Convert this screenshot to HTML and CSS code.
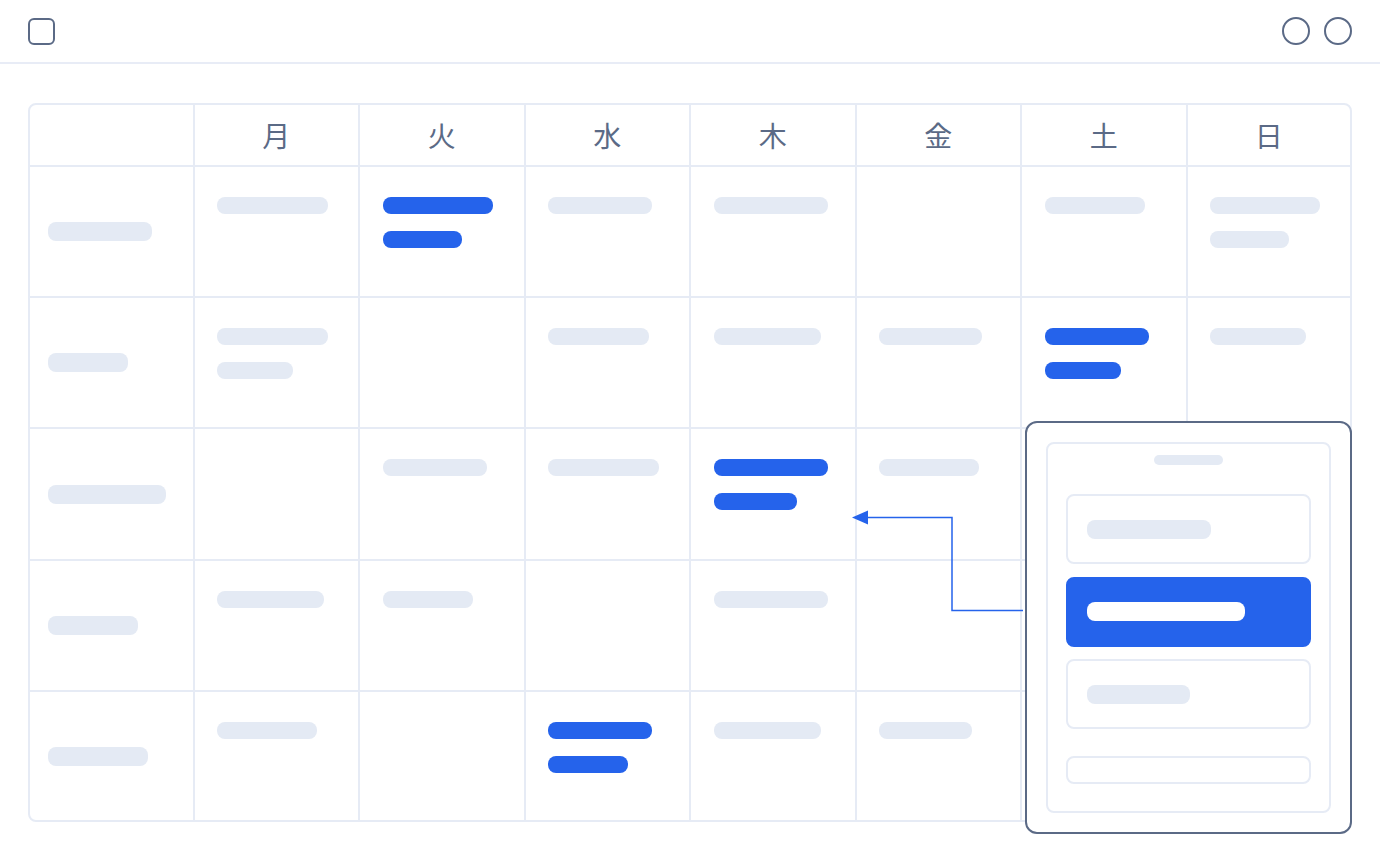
FILE: index.html
```html
<!DOCTYPE html>
<html lang="ja">
<head>
    <meta charset="UTF-8">
    <meta name="viewport" content="width=device-width, initial-scale=1.0">
    <title>週間スケジュール</title>
    <link rel="stylesheet" href="styles.css">
</head>
<body>
    <div class="topbar">
        <span class="icon-square"></span>
        <div class="topbar-actions">
            <span class="icon-circle"></span>
            <span class="icon-circle"></span>
        </div>
    </div>

    <div class="board">
        <div class="week">
            <div class="cell head"></div>
            <div class="cell head">月</div>
            <div class="cell head">火</div>
            <div class="cell head">水</div>
            <div class="cell head">木</div>
            <div class="cell head">金</div>
            <div class="cell head">土</div>
            <div class="cell head last-col">日</div>

            <!-- row 1 -->
            <div class="cell label"><span class="bar label-bar" style="width:104px"></span></div>
            <div class="cell"><span class="bar" style="width:111px"></span></div>
            <div class="cell"><span class="bar blue" style="width:110px"></span><span class="bar blue" style="width:79px"></span></div>
            <div class="cell"><span class="bar" style="width:104px"></span></div>
            <div class="cell"><span class="bar" style="width:114px"></span></div>
            <div class="cell"></div>
            <div class="cell"><span class="bar" style="width:100px"></span></div>
            <div class="cell last-col"><span class="bar" style="width:110px"></span><span class="bar" style="width:79px"></span></div>

            <!-- row 2 -->
            <div class="cell label"><span class="bar label-bar" style="width:80px"></span></div>
            <div class="cell"><span class="bar" style="width:111px"></span><span class="bar" style="width:76px"></span></div>
            <div class="cell"></div>
            <div class="cell"><span class="bar" style="width:101px"></span></div>
            <div class="cell"><span class="bar" style="width:107px"></span></div>
            <div class="cell"><span class="bar" style="width:103px"></span></div>
            <div class="cell"><span class="bar blue" style="width:104px"></span><span class="bar blue" style="width:76px"></span></div>
            <div class="cell last-col"><span class="bar" style="width:96px"></span></div>

            <!-- row 3 -->
            <div class="cell label"><span class="bar label-bar" style="width:118px"></span></div>
            <div class="cell"></div>
            <div class="cell"><span class="bar" style="width:104px"></span></div>
            <div class="cell"><span class="bar" style="width:111px"></span></div>
            <div class="cell"><span class="bar blue" style="width:114px"></span><span class="bar blue" style="width:83px"></span></div>
            <div class="cell"><span class="bar" style="width:100px"></span></div>
            <div class="cell"></div>
            <div class="cell last-col"></div>

            <!-- row 4 -->
            <div class="cell label"><span class="bar label-bar" style="width:90px"></span></div>
            <div class="cell"><span class="bar" style="width:107px"></span></div>
            <div class="cell"><span class="bar" style="width:90px"></span></div>
            <div class="cell"></div>
            <div class="cell"><span class="bar" style="width:114px"></span></div>
            <div class="cell"></div>
            <div class="cell"></div>
            <div class="cell last-col"></div>

            <!-- row 5 -->
            <div class="cell label last-row"><span class="bar label-bar" style="width:100px"></span></div>
            <div class="cell last-row"><span class="bar" style="width:100px"></span></div>
            <div class="cell last-row"></div>
            <div class="cell last-row"><span class="bar blue" style="width:104px"></span><span class="bar blue" style="width:80px"></span></div>
            <div class="cell last-row"><span class="bar" style="width:107px"></span></div>
            <div class="cell last-row"><span class="bar" style="width:93px"></span></div>
            <div class="cell last-row"></div>
            <div class="cell last-row last-col"></div>
        </div>

        <!-- connector from the picker to the selected slot -->
        <svg class="connector" viewBox="28 103 1324 731" width="1324" height="731">
            <path d="M866 517.5 H952 V610.5 H1023" fill="none" stroke="#2563eb" stroke-width="1.5"/>
            <path d="M852 517.5 L868 510.5 L868 524.5 Z" fill="#2563eb"/>
        </svg>

        <div class="picker">
            <div class="picker-inner">
                <span class="handle"></span>
                <div class="option"><span class="bar label-bar" style="width:124px"></span></div>
                <div class="option selected"><span class="bar label-bar white" style="width:158px"></span></div>
                <div class="option"><span class="bar label-bar" style="width:103px"></span></div>
                <div class="picker-footer"></div>
            </div>
        </div>
    </div>
</body>
</html>
```

FILE: styles.css
```css
body {
    margin: 0;
    padding: 0 0 40px;
    background: #fff;
    font-family: "Noto Sans CJK JP", "Noto Sans", sans-serif;
}
.topbar {
    height: 62px;
    padding: 0 28px;
    display: flex;
    align-items: center;
    justify-content: space-between;
    border-bottom: 2px solid #e8ecf6;
}
.icon-square {
    width: 27px;
    height: 27px;
    box-sizing: border-box;
    border: 2px solid #5b6a86;
    border-radius: 6px;
}
.topbar-actions {
    display: flex;
    gap: 14px;
}
.icon-circle {
    width: 28px;
    height: 28px;
    box-sizing: border-box;
    border: 2px solid #5b6a86;
    border-radius: 50%;
}
.board {
    position: relative;
    width: 1324px;
    height: 731px;
    margin: 39px 28px 0;
}
.week {
    display: grid;
    grid-template-columns: 164.5px repeat(6, 165.5px) 162.5px;
    grid-template-rows: 62px 131px 131px 132px 131px 128px;
    border: 2px solid #e6ebf5;
    border-radius: 8px;
}
.cell {
    box-sizing: border-box;
    border-right: 2px solid #e6ebf5;
    border-bottom: 2px solid #e6ebf5;
    padding: 30px 0 0 22.5px;
    display: flex;
    flex-direction: column;
    align-items: flex-start;
    gap: 17px;
}
.cell.last-col {
    border-right: none;
}
.cell.last-row {
    border-bottom: none;
}
.cell.head {
    padding: 0;
    align-items: center;
    justify-content: center;
    font-size: 28px;
    color: #5b6a86;
}
.cell.label {
    padding: 0 0 0 18px;
    justify-content: center;
}
.bar {
    display: block;
    height: 17px;
    border-radius: 8px;
    background: #e4eaf4;
}
.bar.blue {
    background: #2563eb;
}
.label-bar {
    height: 19px;
}
.bar.white {
    background: #fff;
}
.connector {
    position: absolute;
    left: 0;
    top: 0;
    pointer-events: none;
}
.picker {
    position: absolute;
    left: 997px;
    top: 318px;
    width: 327px;
    box-sizing: border-box;
    padding: 19px;
    background: #fff;
    border: 2px solid #5b6a86;
    border-radius: 12px;
}
.picker-inner {
    border: 2px solid #e6ebf5;
    border-radius: 8px;
    padding: 11px 18px 27px;
    display: flex;
    flex-direction: column;
    gap: 12.5px;
}
.handle {
    align-self: center;
    width: 69px;
    height: 10px;
    border-radius: 5px;
    background: #e4eaf4;
    margin-bottom: 16.5px;
}
.option {
    height: 70px;
    box-sizing: border-box;
    border: 2px solid #e6ebf5;
    border-radius: 8px;
    padding-left: 19px;
    display: flex;
    align-items: center;
}
.option.selected {
    background: #2563eb;
    border-color: #2563eb;
}
.picker-footer {
    height: 28px;
    box-sizing: border-box;
    border: 2px solid #e6ebf5;
    border-radius: 8px;
    margin-top: 14.5px;
}
```
